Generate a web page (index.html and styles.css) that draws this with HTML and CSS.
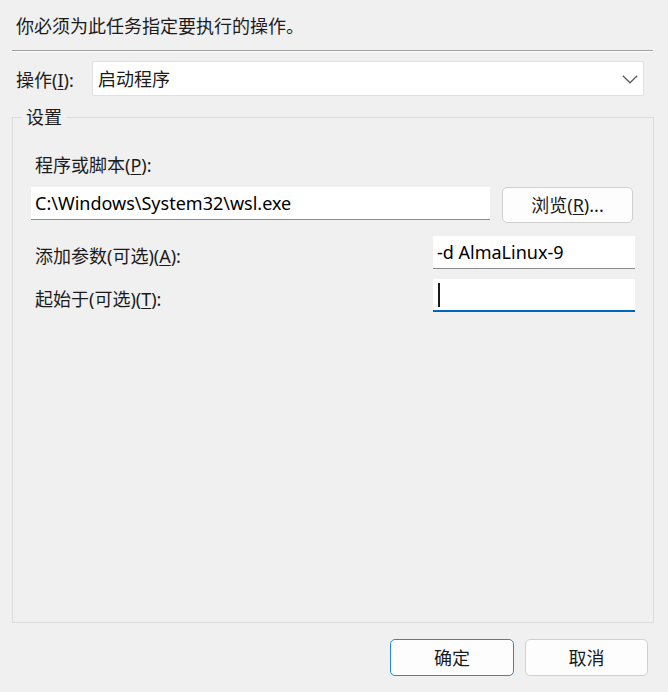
FILE: index.html
```html
<!DOCTYPE html>
<html lang="zh-CN">
<head>
<meta charset="utf-8">
<title>操作</title>
<link rel="stylesheet" href="styles.css">
</head>
<body>
<div class="dialog">
  <div class="intro">你必须为此任务指定要执行的操作。</div>
  <div class="sep"></div>
  <div class="op-row">
    <span class="op-label">操作(<u>I</u>):</span>
    <div class="combo">
      <span class="combo-text">启动程序</span>
      <svg class="chev" width="16" height="9" viewBox="0 0 16 9"><polyline points="0.8,0.8 8,7.8 15.2,0.8" fill="none" stroke="#5f5f5f" stroke-width="1.4"/></svg>
    </div>
  </div>
  <div class="group">
    <span class="legend">设置</span>
    <div class="field-label">程序或脚本(<u>P</u>):</div>
    <div class="prog-row">
      <div class="input prog">C:\Windows\System32\wsl.exe</div>
      <button class="btn browse">浏览(<u>R</u>)...</button>
    </div>
    <div class="param-row first">
      <span class="param-label">添加参数(可选)(<u>A</u>):</span>
      <div class="input param">-d AlmaLinux-9</div>
    </div>
    <div class="param-row">
      <span class="param-label">起始于(可选)(<u>T</u>):</span>
      <div class="input param focused"><span class="caret"></span></div>
    </div>
  </div>
  <div class="footer">
    <button class="btn action primary">确定</button>
    <button class="btn action">取消</button>
  </div>
</div>
</body>
</html>
```
FILE: styles.css
```css
* { box-sizing: border-box; }
html, body {
  margin: 0;
  padding: 0;
  background: #f0f0f0;
}
body {
  width: 668px;
  height: 692px;
  overflow: hidden;
  font-family: "Noto Sans", "Noto Sans CJK SC", sans-serif;
  font-size: 18px;
  line-height: 24px;
  color: #1b1b1b;
}
u { text-decoration-thickness: 1px; text-underline-offset: 2px; }

.dialog { display: flex; flex-direction: column; }

.intro {
  padding: 14px 0 0 16px;
  height: 50px;
}
.sep {
  margin: 0 15px 0 12px;
  height: 2px;
  border-top: 1px solid #a0a0a0;
  border-bottom: 1px solid #ffffff;
}

.op-row {
  display: flex;
  align-items: center;
  margin: 9px 24px 0 16px;
}
.op-label {
  width: 76px;
  padding-top: 3px;
}
.combo {
  flex: 1;
  height: 35px;
  background: #ffffff;
  border: 1px solid #e1e1e1;
  border-radius: 2px;
  display: flex;
  align-items: center;
  justify-content: space-between;
  padding: 0 5px 0 5px;
}
.chev { margin-right: 0; margin-top: 1px; }

.group {
  position: relative;
  margin: 21px 0 0 12px;
  width: 642px;
  height: 506px;
  border: 1px solid #dcdcdc;
  padding: 35px 18px 0 18px;
}
.legend {
  position: absolute;
  top: -13px;
  left: 9px;
  padding: 0 4px;
  background: #f0f0f0;
}
.field-label { padding-left: 4px; }

.prog-row {
  display: flex;
  gap: 12px;
  margin-top: 10px;
  align-items: flex-start;
}
.input {
  background: #ffffff;
  border-bottom: 1px solid #8c8c8c;
  padding: 4px 4px 0 4px;
  color: #000;
  white-space: nowrap;
}
.prog { flex: 1; height: 33px; }
.btn {
  font: inherit;
  color: #1b1b1b;
  background: #fdfdfd;
  border: 1px solid #d0d0d0;
  border-radius: 5px;
  padding: 0;
  cursor: default;
}
.browse {
  width: 131px;
  height: 36px;
  margin-right: 2px;
}

.param-row {
  display: flex;
  justify-content: space-between;
  align-items: flex-start;
  margin-top: 10px;
}
.param-row.first { margin-top: 13px; }
.param-label {
  padding: 8px 0 0 4px;
}
.param {
  width: 202px;
  height: 33px;
}
.focused {
  border-bottom: 2px solid #0067c0;
  padding-top: 4px;
}
.caret {
  display: block;
  width: 2px;
  height: 24px;
  background: #1a1a1a;
  margin-left: 1px;
}

.footer {
  display: flex;
  justify-content: flex-end;
  gap: 11px;
  margin-top: 16px;
  padding-right: 20px;
}
.action {
  width: 124px;
  height: 37px;
}
.action + .action { width: 123px; }
.primary { border-color: #2d86de; }
```
